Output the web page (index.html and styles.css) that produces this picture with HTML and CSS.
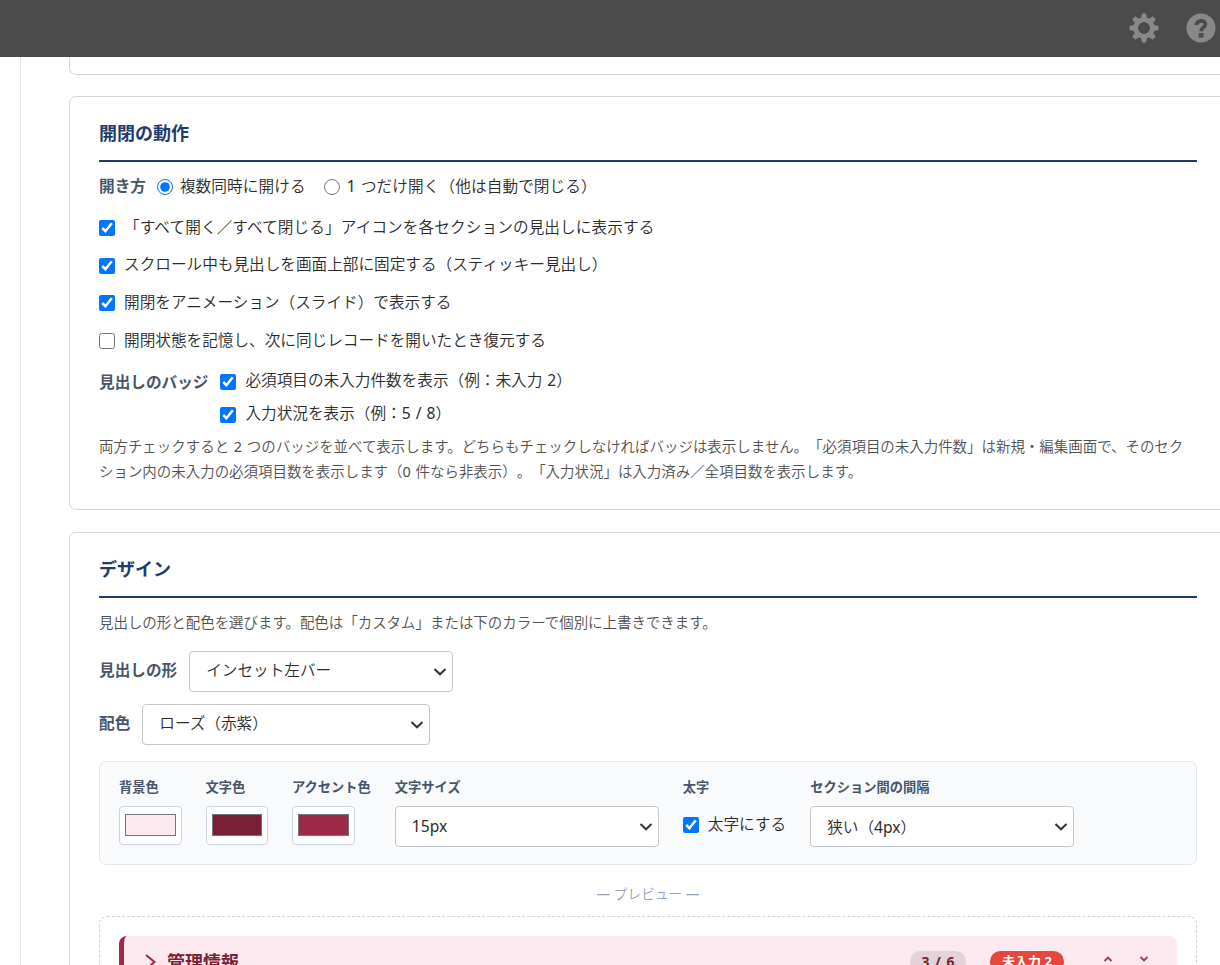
FILE: index.html
```html
<!DOCTYPE html>
<html lang="ja">
<head>
    <meta charset="UTF-8">
    <meta name="viewport" content="width=device-width, initial-scale=1.0">
    <title>プラグイン設定</title>
    <link rel="stylesheet" href="styles.css">
</head>
<body>
    <header class="topbar">
        <svg class="icon-gear" width="30" height="30" viewBox="-15 -15 30 30">
            <g fill="#888">
                <g id="teeth">
                    <path id="tooth" d="M-3.4 -8 L-2 -14.5 H2 L3.4 -8 Z"/>
                    <use href="#tooth" transform="rotate(90)"/>
                    <use href="#tooth" transform="rotate(180)"/>
                    <use href="#tooth" transform="rotate(270)"/>
                </g>
                <use href="#teeth" transform="rotate(45)"/>
            </g>
            <circle r="8.2" fill="none" stroke="#888" stroke-width="5"/>
            <circle r="5.7" fill="#4b4b4b"/>
        </svg>
        <svg class="icon-help" width="30" height="30" viewBox="0 0 30 30">
            <circle cx="15" cy="15" r="14.5" fill="#888"/>
            <path d="M10.4 12 C10.6 6.4 19.4 6.6 19.4 11.3 C19.4 14.6 15 14.4 15 18.2" fill="none" stroke="#4b4b4b" stroke-width="3.8"/>
            <rect x="12.8" y="20" width="4.8" height="4.6" fill="#4b4b4b"/>
        </svg>
    </header>

    <main class="page">
        <section class="card card-prev"></section>

        <section class="card">
            <h2>開閉の動作</h2>
            <div class="row row-radio">
                <span class="label">開き方</span>
                <label class="choice"><input type="radio" name="mode" checked><span>複数同時に開ける</span></label>
                <label class="choice"><input type="radio" name="mode"><span>1 つだけ開く（他は自動で閉じる）</span></label>
            </div>
            <label class="check check-all"><input type="checkbox" checked><span>「すべて開く／すべて閉じる」アイコンを各セクションの見出しに表示する</span></label>
            <label class="check"><input type="checkbox" checked><span>スクロール中も見出しを画面上部に固定する（スティッキー見出し）</span></label>
            <label class="check"><input type="checkbox" checked><span>開閉をアニメーション（スライド）で表示する</span></label>
            <label class="check"><input type="checkbox"><span>開閉状態を記憶し、次に同じレコードを開いたとき復元する</span></label>
            <div class="row row-badge">
                <span class="label">見出しのバッジ</span>
                <div class="badge-list">
                    <label class="check"><input type="checkbox" checked><span>必須項目の未入力件数を表示（例：未入力 2）</span></label>
                    <label class="check"><input type="checkbox" checked><span>入力状況を表示（例：5 / 8）</span></label>
                </div>
            </div>
            <p class="hint">両方チェックすると 2 つのバッジを並べて表示します。どちらもチェックしなければバッジは表示しません。「必須項目の未入力件数」は新規・編集画面で、そのセク<br>ション内の未入力の必須項目数を表示します（0 件なら非表示）。「入力状況」は入力済み／全項目数を表示します。</p>
        </section>

        <section class="card card-design">
            <h2>デザイン</h2>
            <p class="hint">見出しの形と配色を選びます。配色は「カスタム」または下のカラーで個別に上書きできます。</p>
            <div class="row row-select">
                <span class="label">見出しの形</span>
                <div class="select"><span>インセット左バー</span><svg width="14" height="8" viewBox="0 0 14 8"><path d="M1.5 1 L7 6.3 L12.5 1"/></svg></div>
            </div>
            <div class="row row-select">
                <span class="label">配色</span>
                <div class="select select-wide"><span>ローズ（赤紫）</span><svg width="14" height="8" viewBox="0 0 14 8"><path d="M1.5 1 L7 6.3 L12.5 1"/></svg></div>
            </div>

            <div class="panel">
                <div class="field">
                    <span class="field-label">背景色</span>
                    <div class="color"><div class="swatch swatch-bg"></div></div>
                </div>
                <div class="field">
                    <span class="field-label">文字色</span>
                    <div class="color"><div class="swatch swatch-text"></div></div>
                </div>
                <div class="field">
                    <span class="field-label">アクセント色</span>
                    <div class="color"><div class="swatch swatch-accent"></div></div>
                </div>
                <div class="field">
                    <span class="field-label">文字サイズ</span>
                    <div class="select"><span>15px</span><svg width="14" height="8" viewBox="0 0 14 8"><path d="M1.5 1 L7 6.3 L12.5 1"/></svg></div>
                </div>
                <div class="field">
                    <span class="field-label">太字</span>
                    <label class="check"><input type="checkbox" checked><span>太字にする</span></label>
                </div>
                <div class="field">
                    <span class="field-label">セクション間の間隔</span>
                    <div class="select"><span>狭い（4px）</span><svg width="14" height="8" viewBox="0 0 14 8"><path d="M1.5 1 L7 6.3 L12.5 1"/></svg></div>
                </div>
            </div>

            <p class="preview-title">― プレビュー ―</p>
            <div class="preview">
                <div class="section-head">
                    <svg class="arrow" width="12" height="16" viewBox="0 0 12 16"><path d="M1 1 L9.5 8 L1 15"/></svg>
                    <span class="section-name">管理情報</span>
                    <span class="badge">3 / 6</span>
                    <span class="badge badge-red">未入力 2</span>
                    <svg class="mini" width="10" height="6" viewBox="0 0 10 6"><path d="M1.5 5 L5 1.5 L8.5 5"/></svg>
                    <svg class="mini" width="10" height="6" viewBox="0 0 10 6"><path d="M1.5 1 L5 4.5 L8.5 1"/></svg>
                </div>
            </div>
        </section>
    </main>
</body>
</html>
```
FILE: styles.css
```css
* {
    box-sizing: border-box;
}
body {
    margin: 0;
    height: 965px;
    overflow: hidden;
    background: #fff;
    color: #2b2b2b;
    font-family: "Noto Sans", "Noto Sans CJK JP DemiLight", "Noto Sans CJK JP", sans-serif;
    font-size: 15.63px;
    font-weight: 400;
    text-spacing-trim: space-all;
    white-space: nowrap;
    word-spacing: 1px;
}
h2, p {
    margin: 0;
}
h2,
.label,
.field-label,
.section-head {
    font-family: "Noto Sans", "Noto Sans CJK JP", sans-serif;
}

.topbar {
    display: flex;
    align-items: center;
    justify-content: flex-end;
    gap: 27px;
    height: 57px;
    padding-right: 4.5px;
    background: #4b4b4b;
}
.topbar svg {
    margin-top: -1px;
}

.page {
    margin-left: 20px;
    padding-left: 48px;
    height: 908px;
    border-left: 1px solid #e3e7e8;
    overflow: hidden;
}
.card {
    width: 1158px;
    height: 414px;
    margin-bottom: 22px;
    padding: 22px 29px 25px;
    border: 1px solid #d5d7d8;
    border-radius: 7px;
}
.card-prev {
    height: 18px;
    margin-bottom: 21px;
    padding: 0;
    border-top: 0;
    border-radius: 0 0 7px 7px;
}
.card h2 {
    height: 43px;
    border-bottom: 2px solid #1e3a6e;
    color: #1e3a6e;
    font-size: 18px;
    font-weight: 700;
    line-height: 28px;
}

.row {
    display: flex;
    align-items: center;
}
.label {
    color: #475569;
    font-weight: 700;
}
input {
    flex: none;
    width: 16px;
    height: 16px;
    margin: 0;
}
.choice,
.check {
    display: flex;
    align-items: center;
}
.choice span,
.check span {
    position: relative;
    top: -2px;
}
.row-radio {
    height: 30px;
    margin: 10px 0 7.5px;
    letter-spacing: 0.1px;
}
.row-radio .label {
    margin-top: -3px;
    letter-spacing: 0;
}
.choice {
    margin-left: 11px;
    gap: 7px;
}
.choice + .choice {
    margin-left: 18px;
}
.check {
    height: 37.6px;
    gap: 9px;
}
.check-all {
    letter-spacing: 0.1px;
}
.row-badge {
    align-items: flex-start;
    gap: 12px;
    margin: 5.6px 0 3px;
    line-height: 35px;
}
.row-badge .check {
    height: 33px;
}
.row-badge .check span {
    top: -1.5px;
}
.hint {
    color: #505050;
    font-size: 14.46px;
    line-height: 25px;
}

.card-design {
    height: 600px;
}
.card-design .hint {
    margin: 12px 0 16px;
}
.row-select {
    gap: 12px;
    margin-bottom: 12px;
}
.row-select .label {
    margin-top: -4px;
}
.select {
    display: flex;
    align-items: center;
    justify-content: space-between;
    width: 264px;
    height: 41px;
    padding: 0 5px 0 16px;
    border: 1px solid #c4c6c8;
    border-radius: 4px;
    background: #fff;
}
.row-select .select span {
    margin-top: -4px;
}
.select-wide {
    width: 288px;
}
.select path {
    fill: none;
    stroke: #333;
    stroke-width: 2;
}

.panel {
    display: flex;
    gap: 24px;
    height: 104px;
    margin-top: 16px;
    padding: 12px 19px;
    border: 1px solid #e2e8f0;
    border-radius: 7px;
    background: #f8fafc;
}
.panel .select span {
    margin-top: -1px;
}
.field-label {
    display: block;
    height: 32px;
    color: #475569;
    font-size: 13.25px;
    font-weight: 700;
    line-height: 26px;
}
.panel .check span {
    top: -1px;
}
.color {
    width: 62.5px;
    height: 39px;
    padding: 7px 5px;
    border: 1px solid #cbd5e1;
    border-radius: 4px;
    background: #fff;
}
.swatch {
    height: 22px;
    border: 1px solid #767676;
}
.swatch-bg {
    background: #fbe9ef;
}
.swatch-text {
    background: #7a1f37;
}
.swatch-accent {
    background: #9d2848;
}

.preview-title {
    margin-top: 16px;
    height: 35px;
    color: #94a3b8;
    font-size: 13.7px;
    line-height: 26px;
    text-align: center;
    word-spacing: 0;
}
.preview {
    height: 160px;
    padding: 19px;
    border: 1px dashed #cbd5e1;
    border-radius: 8px;
}
.section-head {
    display: flex;
    align-items: center;
    height: 51px;
    padding: 0 28px 0 21px;
    border-left: 5px solid #9d2848;
    border-radius: 8px;
    background: #fbe9ef;
    color: #7a1f37;
    font-weight: 700;
}
.section-head path {
    fill: none;
    stroke: #9d2848;
    stroke-width: 2;
}
.section-name {
    flex: 1;
    margin: -2px 0 0 10px;
    font-size: 18px;
}
.badge {
    width: 56px;
    height: 21px;
    border-radius: 11px;
    background: #e3d3d9;
    font-size: 14px;
    line-height: 21px;
    text-align: center;
    word-spacing: 2px;
}
.badge-red {
    width: 74px;
    margin: 0 39px 0 24px;
    background: #e8453c;
    color: #fff;
    font-size: 13px;
    word-spacing: 0;
}
.section-head .mini {
    margin-top: -5px;
}
.section-head .mini path {
    stroke: #94405a;
    stroke-width: 1.8;
}
.mini + .mini {
    margin-left: 26px;
}
```
